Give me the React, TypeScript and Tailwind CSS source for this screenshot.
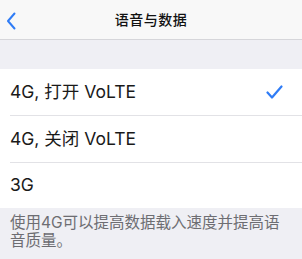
const rows = [
  { label: '4G, 打开 VoLTE', checked: true },
  { label: '4G, 关闭 VoLTE', checked: false },
  { label: '3G', checked: false },
];

export default function App() {
  return (
    <div
      className="w-[302px] h-[259px] overflow-hidden bg-[#efeff4]"
      style={{ fontFamily: 'Inter, "Noto Sans CJK SC", sans-serif' }}
    >
      <header className="relative flex h-[40px] items-center justify-center border-b border-[#d6d6da] bg-[#f8f8f8]">
        <svg className="absolute left-[6px] top-[12px]" width="10" height="18" viewBox="0 0 10 18" fill="none">
          <path d="M8.5 1.5L2 9l6.5 7.5" stroke="#2f7cf6" strokeWidth="2" strokeLinecap="round" strokeLinejoin="round" />
        </svg>
        <h1 className="text-[14px] font-medium text-[#111] tracking-[0.5px]">语音与数据</h1>
      </header>

      <div className="h-[29px]" />

      <ul className="bg-white">
        {rows.map((r, i) => (
          <li key={i} className="pl-[10px]">
            <div
              className={
                'flex items-center justify-between pr-[19px] ' +
                (i < rows.length - 1 ? 'h-[47px] border-b border-[#e2e2e6]' : 'h-[45px]')
              }
            >
              <span className="text-[17.5px] text-[#1a1a1a]">{r.label}</span>
              {r.checked && (
                <svg width="17" height="14" viewBox="0 0 17 14" fill="none">
                  <path d="M1.5 7.5l4.5 5L15.5 1.5" stroke="#2f7cf6" strokeWidth="2.2" strokeLinecap="round" strokeLinejoin="round" />
                </svg>
              )}
            </div>
          </li>
        ))}
      </ul>

      <p className="px-[10px] pt-[6px] text-[15.5px] leading-[18px] text-[#6d6d72]">
        使用4G可以提高数据载入速度并提高语音质量。
      </p>
    </div>
  );
}
